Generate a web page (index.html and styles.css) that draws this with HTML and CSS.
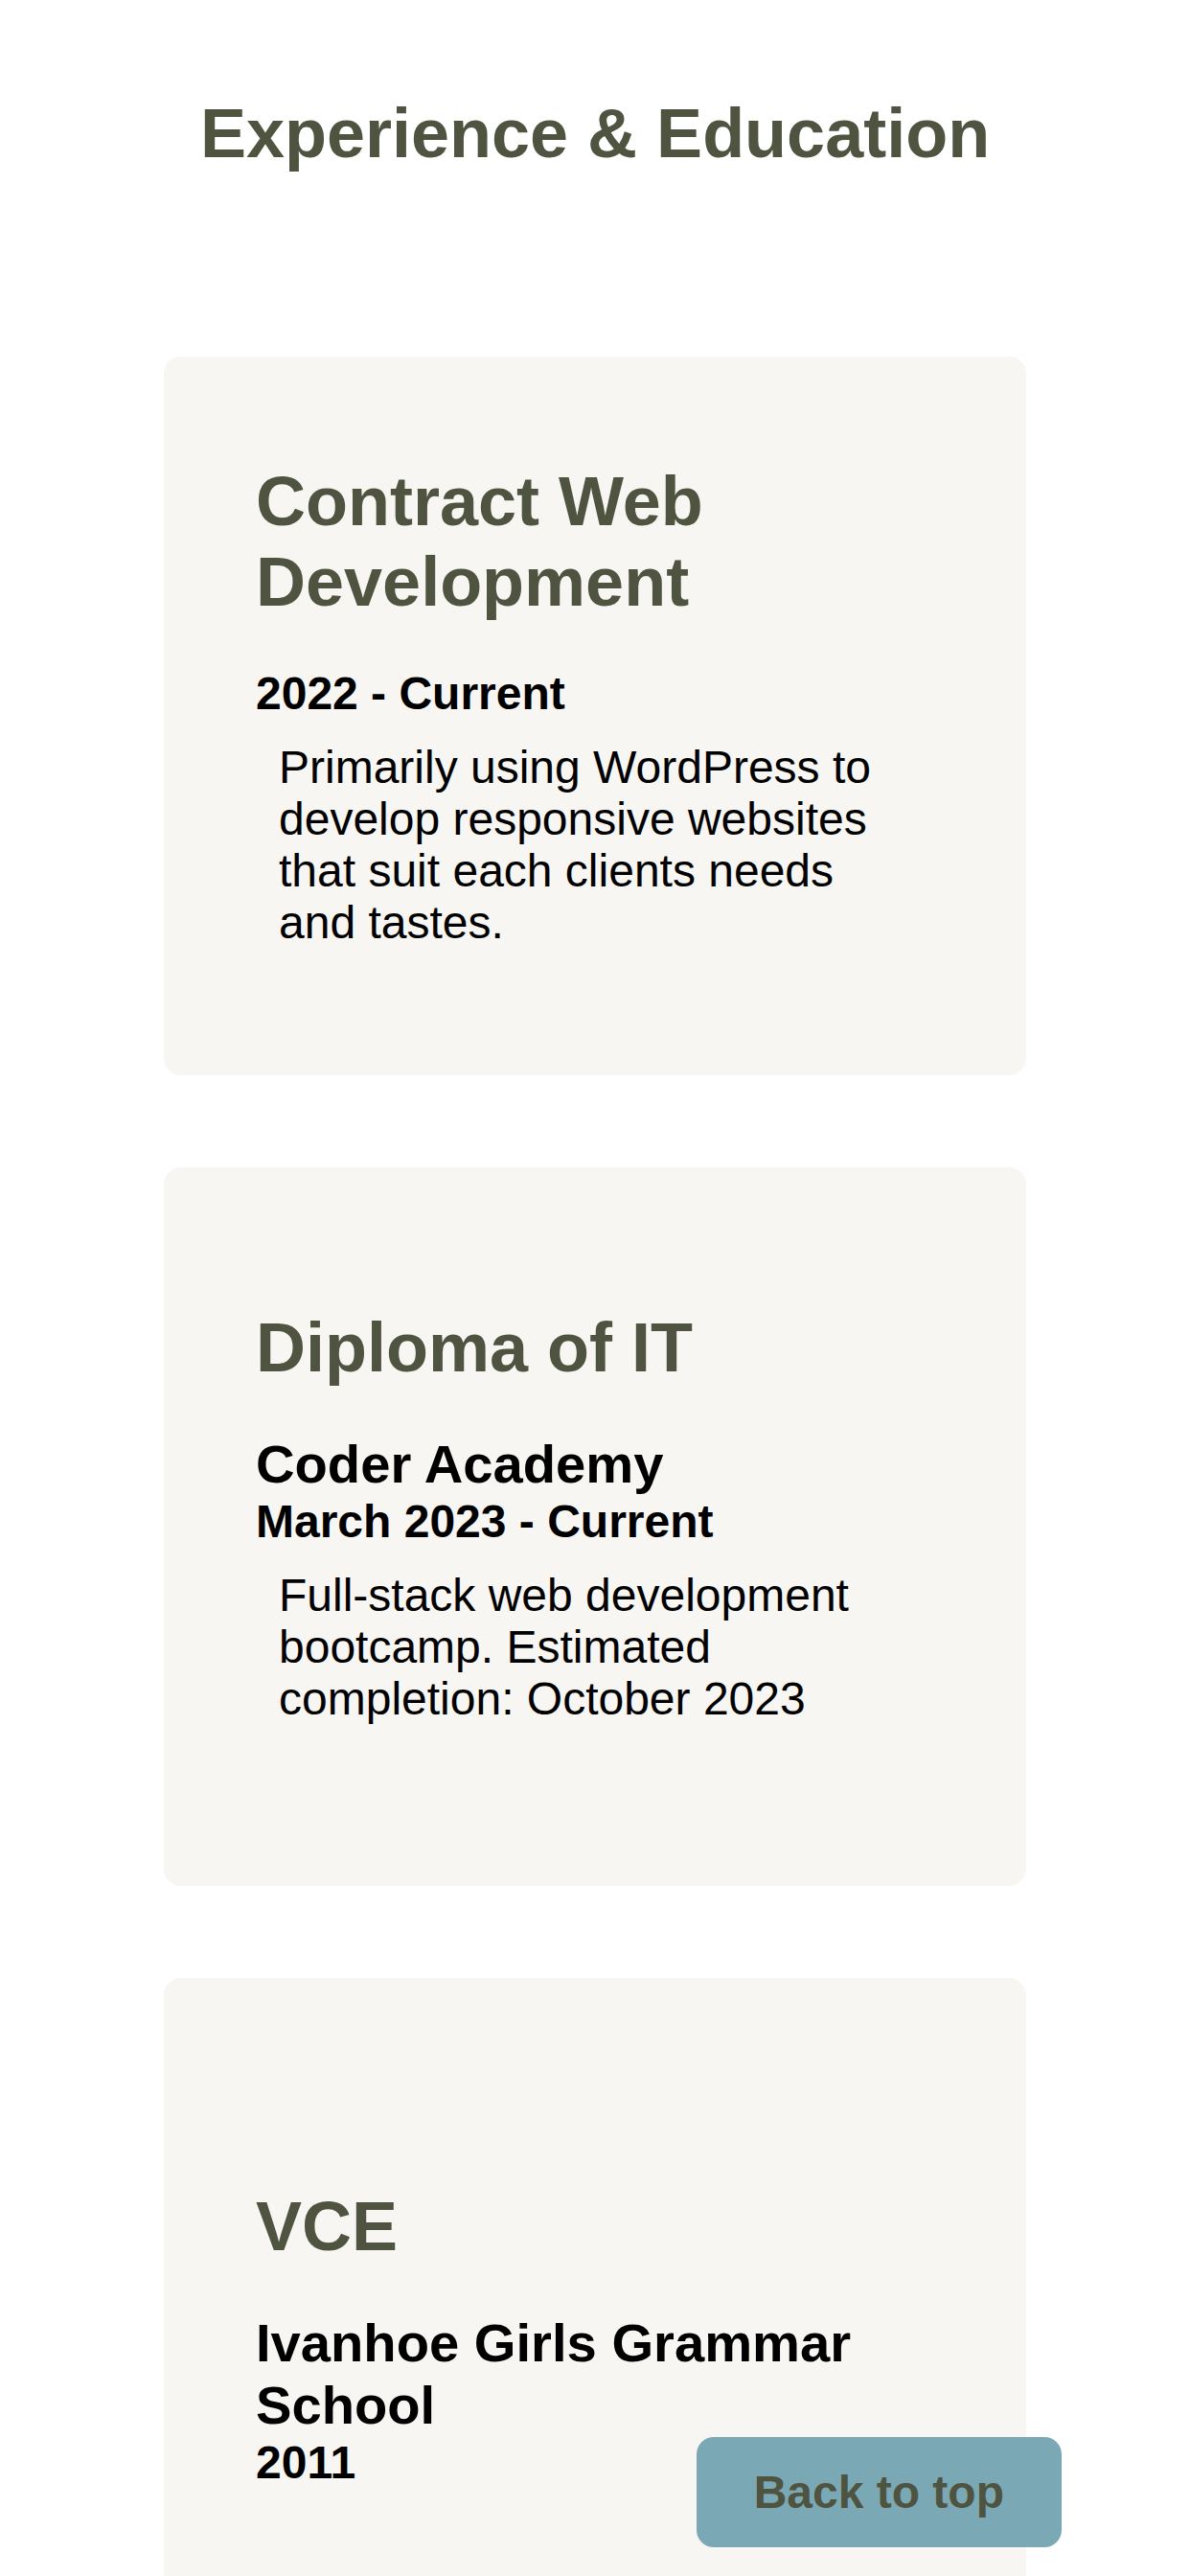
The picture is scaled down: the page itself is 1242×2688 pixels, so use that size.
FILE: index.html
```html
<!DOCTYPE html>
<html lang="en">
<head>
<meta charset="utf-8">
<title>Experience &amp; Education</title>
<link rel="stylesheet" href="styles.css">
</head>
<body>
<section class="experience">
  <h1 class="section-title">Experience &amp; Education</h1>
  <div class="cards">
    <article class="card">
      <h2 class="card-title">Contract Web Development</h2>
      <h4 class="card-date">2022 - Current</h4>
      <p class="card-desc">Primarily using WordPress to develop responsive websites that suit each clients needs and tastes.</p>
    </article>
    <article class="card">
      <h2 class="card-title">Diploma of IT</h2>
      <h3 class="card-org">Coder Academy</h3>
      <h4 class="card-date">March 2023 - Current</h4>
      <p class="card-desc">Full-stack web development bootcamp. Estimated completion: October 2023</p>
    </article>
    <article class="card">
      <h2 class="card-title">VCE</h2>
      <h3 class="card-org">Ivanhoe Girls Grammar School</h3>
      <h4 class="card-date">2011</h4>
    </article>
  </div>
</section>
<a class="back-to-top" href="#">Back to top</a>
</body>
</html>
```
FILE: styles.css
```css
html, body {
  margin: 0;
  padding: 0;
  background: #ffffff;
}

body {
  font-family: "Liberation Sans", Arial, sans-serif;
  color: #000000;
}

.experience {
  display: flex;
  flex-direction: column;
  align-items: center;
  padding-top: 97px;
}

.section-title {
  margin: 0 0 191px 0;
  font-size: 72px;
  line-height: 84px;
  font-weight: 700;
  color: #4f5441;
  text-align: center;
}

.cards {
  display: flex;
  flex-direction: column;
  gap: 96px;
  width: 900px;
}

.card {
  box-sizing: border-box;
  height: 750px;
  background: #f7f6f3;
  border-radius: 18px;
  padding: 0 96px;
  display: flex;
  flex-direction: column;
  justify-content: center;
}

.card-title {
  margin: 0 0 47px 0;
  font-size: 72px;
  line-height: 84px;
  font-weight: 700;
  color: #4f5441;
}

.card-org {
  margin: 0;
  font-size: 56.16px;
  line-height: 65px;
  font-weight: 700;
}

.card-date {
  margin: 0;
  font-size: 48px;
  line-height: 55px;
  font-weight: 700;
}

.card-desc {
  margin: 23px 24px;
  font-size: 48px;
  line-height: 54px;
  font-weight: 400;
}

.back-to-top {
  position: fixed;
  right: 134px;
  bottom: 30px;
  padding: 30px 60px;
  background: #7ba8b5;
  border-radius: 18px;
  color: #4f5441;
  font-size: 48px;
  line-height: 55px;
  font-weight: 700;
  text-decoration: none;
}
```
